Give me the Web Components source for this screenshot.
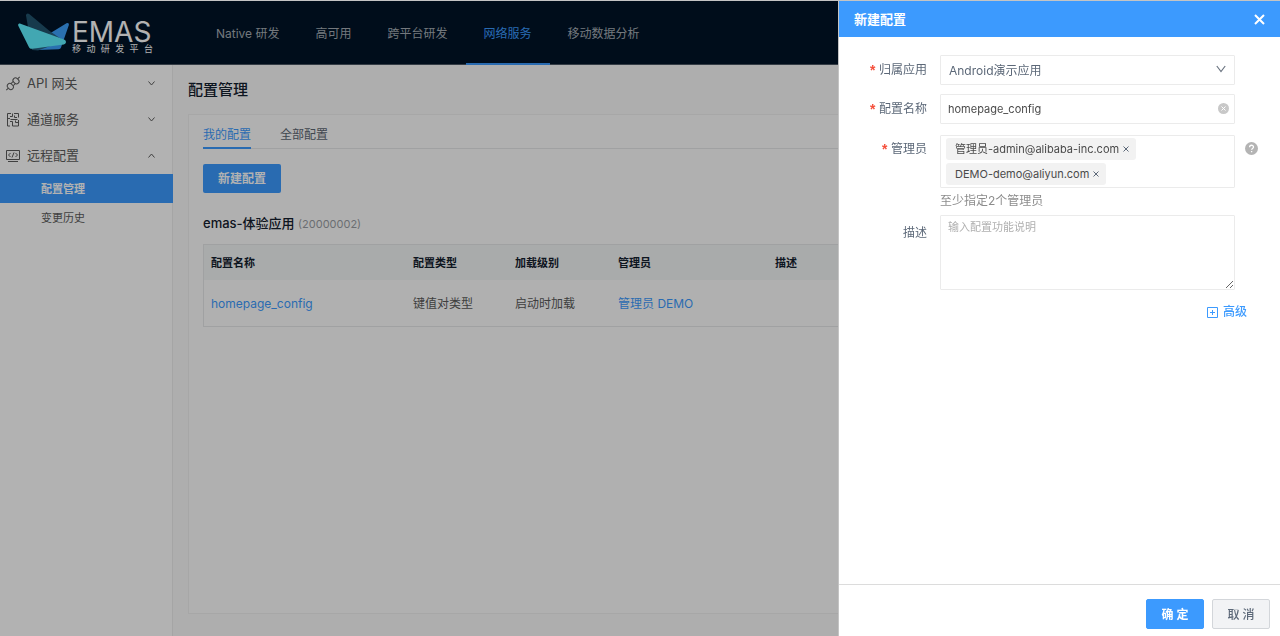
<!DOCTYPE html>
<html lang="zh-CN">
<head>
<meta charset="utf-8">
<title>EMAS 配置管理</title>
<style>
  body {
    margin: 0;
    font-family: Inter, "Noto Sans CJK SC", sans-serif;
    font-size: 12px;
    line-height: 18px;
    color: #5a5a5a;
    --brand: #3c9afe;
    --line: #e6e7e8;
    --ink: #14202e;
  }
</style>
</head>
<body>
<emas-app></emas-app>
<script>
const define = (name, html, setup) => customElements.define(name, class extends HTMLElement {
  constructor() {
    super();
    const t = document.createElement('template');
    t.innerHTML = html;
    this.attachShadow({ mode: 'open' }).append(t.content.cloneNode(true));
    if (setup) setup(this.shadowRoot, this);
  }
});

define('emas-logo', `
<style>
  :host { display: flex; align-items: flex-start; gap: 2px; color: #fff; }
  svg { display: block; margin-top: 12px; }
  .word { display: flex; flex-direction: column; width: 81px; padding-top: 19px; }
  .name { font-size: 28px; line-height: 24px; font-weight: 400; }
  .sub { font-size: 9px; line-height: 9px; text-align: justify; text-align-last: justify; }
</style>
<svg width="52" height="40" viewBox="0 0 52 40" aria-hidden="true">
  <path fill="#3da1fd" d="M48.500 10.200c1.700-.6 2.800.4 2.300 2L43 34.500c-.5 1.300-1.200 1.700-2.500 1.700L20 37 14 34 30.500 21.300z"/>
  <path fill="#255a75" d="M8 2.500C8 .6 9.800-.1 11.200 1L31 17.500 46 28 20 37.500 14 37z" opacity=".9"/>
  <path fill="#5ff0ff" d="M2.500 10.700 46 26.500c2.800 1 2.500 4.500-.2 5L14.500 35.800c-1.700.2-2.700-.2-3.500-1.600L.4 13c-.8-1.600.4-2.900 2.100-2.300z"/>
</svg>
<div class="word"><span class="name">EMAS</span><span class="sub">移动研发平台</span></div>
`);

define('app-header', `
<style>
  :host { display: flex; height: 63px; background: #001428; border-bottom: 1px solid #4b5764; padding-left: 18px; }
  emas-logo { width: 180px; flex: none; }
  nav { display: flex; }
  a { display: flex; align-items: center; padding: 3px 18px 0; color: #a6adb4; text-decoration: none; border-bottom: 2px solid transparent; margin-bottom: -1px; white-space: nowrap; }
  a[aria-current] { color: var(--brand); border-color: var(--brand); }
</style>
<emas-logo></emas-logo>
<nav>
  <a href="#native">Native 研发</a><a href="#ha">高可用</a><a href="#cross">跨平台研发</a><a href="#net" aria-current="page">网络服务</a><a href="#data">移动数据分析</a>
</nav>
`);

define('menu-group', `
<style>
  :host { display: block; }
  button { display: flex; align-items: center; width: 100%; height: 36px; margin: 0; padding: 0 16px 0 5px; border: 0; background: none; font: inherit; font-size: 13px; color: inherit; gap: 6px; text-align: left; }
  .label { flex: 1; }
  ::slotted(svg) { width: 16px; height: 16px; flex: none; }
  .arrow { width: 9px; height: 9px; }
  :host([open]) .arrow { transform: rotate(180deg); }
</style>
<button type="button"><slot name="icon"></slot><span class="label"></span>
<svg class="arrow" viewBox="0 0 9 9" fill="none" stroke="currentColor"><path d="M1.500 2.500l3 3.500 3-3.500"/></svg></button>
<slot></slot>
`, (root, host) => {
  root.querySelector('.label').textContent = host.getAttribute('label');
  root.querySelector('button').setAttribute('aria-expanded', host.hasAttribute('open'));
});

define('app-sidebar', `
<style>
  :host { display: block; background: #fff; border-right: 1px solid #ececec; box-sizing: border-box; color: #5c5c5c; }
  a { display: flex; align-items: center; height: 29px; padding-left: 41px; font-size: 11px; color: inherit; text-decoration: none; }
  a[aria-current] { background: var(--brand); color: #fff; font-weight: 700; margin: 1px -1px 0 0; }
  svg { fill: none; stroke: currentColor; }
</style>
<menu-group label="API 网关"><svg slot="icon" viewBox="0 0 16 16"><g transform="rotate(-45 8 8.500)"><rect x="1.500" y="5.500" width="5" height="6.500" rx="2.500"/><rect x="9.500" y="5.500" width="5" height="6.500" rx="2.500"/><path d="M-1.500 8.500h3M14.500 8.500h3M6.500 7.200h3M6.500 10.200h3"/></g></svg></menu-group>
<menu-group label="通道服务"><svg slot="icon" viewBox="0 0 16 16"><path d="M6 2.500H2.500V15H5M2.500 7.500H5M7.500 2.500v3H5M9 2.500h4.500v4M13.500 9v6H7.500v-2.500M5 10.500h2.500V15M13.500 11.500h-3v-2M5.500 8.500h7M9.500 4.500v2h2.500"/></svg></menu-group>
<menu-group label="远程配置" open><svg slot="icon" viewBox="0 0 16 16"><path d="M1.500 3.500h13v9h-13zM3 14.500h10M5.500 6L3.500 8l2 2M10.500 6l2 2-2 2M9 5.500l-2 5"/></svg>
  <a href="#config" aria-current="page">配置管理</a>
  <a href="#history">变更历史</a>
</menu-group>
`);

define('config-table', `
<style>
  :host { display: block; }
  table { width: 100%; table-layout: fixed; border-collapse: separate; border-spacing: 0; border: 1px solid var(--line); box-sizing: border-box; }
  th, td { padding: 0 7px; text-align: left; white-space: nowrap; }
  th { height: 35px; background: #f2f5f5; font-size: 11px; font-weight: 700; color: var(--ink); }
  td { height: 44px; padding-top: 2px; }
  a { color: var(--brand); text-decoration: none; }
  .c1 { width: 202px; } .c2 { width: 102px; } .c3 { width: 103px; } .c4 { width: 157px; }
</style>
<table>
  <colgroup><col class="c1"><col class="c2"><col class="c3"><col class="c4"><col></colgroup>
  <thead><tr><th>配置名称</th><th>配置类型</th><th>加载级别</th><th>管理员</th><th>描述</th></tr></thead>
  <tbody><tr><td><a href="#homepage_config">homepage_config</a></td><td>键值对类型</td><td>启动时加载</td><td><a href="#admins">管理员 DEMO</a></td><td></td></tr></tbody>
</table>
`);

define('config-page', `
<style>
  :host { display: flex; flex-direction: column; padding: 14px 15px 22px; background: #fafafa; box-sizing: border-box; }
  h1 { margin: 0 0 14px; font-size: 15px; line-height: 21px; font-weight: 500; color: var(--ink); }
  section { flex: 1; display: flex; flex-direction: column; align-items: stretch; background: #fdfdfd; border: 1px solid #f0f0f0; padding: 5px 14px 14px; }
  .tabs { display: flex; gap: 29px; border-bottom: 1px solid var(--line); margin-bottom: 15px; }
  .tabs button { padding: 2px 0 0; border: 0; background: none; font: inherit; color: #5c6672; height: 29px; border-bottom: 2px solid transparent; margin-bottom: -1px; }
  .tabs button[aria-selected=true] { color: var(--brand); border-color: var(--brand); }
  .create { align-self: flex-start; height: 29px; padding: 0 15px; border: 0; border-radius: 2px; background: var(--brand); color: #fff; font: inherit; font-weight: 700; }
  h2 { margin: 21px 0 11px; font-size: 13px; line-height: 18px; font-weight: 500; color: var(--ink); }
  h2 small { font-size: 11px; font-weight: 400; color: #9a9ea4; }
</style>
<h1>配置管理</h1>
<section>
  <div class="tabs" role="tablist"><button role="tab" aria-selected="true">我的配置</button><button role="tab" aria-selected="false">全部配置</button></div>
  <button class="create" type="button">新建配置</button>
  <h2>emas-体验应用 <small>(20000002)</small></h2>
  <config-table></config-table>
</section>
`);

define('form-row', `
<style>
  :host { display: grid; grid-template-columns: 88px minmax(0, 1fr) 45px; }
  .label { display: flex; justify-content: flex-end; align-items: flex-start; gap: 2px; padding: var(--label-top, 6px) 0 0; color: #5c6878; }
  .star { display: none; color: #f5503c; font: 700 14px/22px "Liberation Mono", monospace; }
  :host([required]) .star { display: block; }
  .control { min-width: 0; padding-left: 13px; }
  .extra { padding: 7px 0 0 10px; }
</style>
<div class="label"><span class="star">*</span><slot name="label"></slot></div>
<div class="control"><slot></slot></div>
<div class="extra"><slot name="extra"></slot></div>
`);

define('admin-tag', `
<style>
  :host { display: inline-flex; align-items: center; height: 22px; padding: 0 6px 0 9px; gap: 3px; background: #f2f2f2; border-radius: 3px; font-size: 11px; color: #4a4a4a; white-space: nowrap; }
  button { display: flex; padding: 0; border: 0; background: none; color: #5c6878; }
  svg { width: 8px; height: 8px; }
</style>
<slot></slot><button type="button" aria-label="移除"><svg viewBox="0 0 8 8" stroke="currentColor"><path d="M1.500 1.500l5 5M6.500 1.500l-5 5"/></svg></button>
`);

define('config-drawer', `
<style>
  :host { display: flex; flex-direction: column; background: #fff; box-shadow: -1px 0 0 #c4c4c4; }
  header { display: flex; align-items: center; justify-content: space-between; height: 36px; padding: 0 15px; background: var(--brand); color: #fff; }
  h2 { margin: 0; font-size: 13px; line-height: 18px; font-weight: 700; }
  button { font: inherit; }
  header button { display: flex; padding: 0; border: 0; background: none; color: #fff; }
  form { flex: 1; display: flex; flex-direction: column; gap: 9px; padding: 18px 0 0; }
  label { line-height: 18px; }
  .box { display: block; position: relative; }
  select, input.name, textarea, .tags { display: block; box-sizing: border-box; width: 100%; border: 1px solid #ebebeb; border-radius: 1px; background: #fff; outline: 0; margin: 0; font: inherit; }
  select, input.name { height: 30px; }
  select { appearance: none; padding: 1px 30px 0 8px; color: #5c6878; }
  input.name { padding: 0 26px 0 7px; font-size: 11px; color: #4a4a4a; }
  .box svg { position: absolute; right: 9px; top: 50%; margin-top: -6px; pointer-events: none; }
  .box .clear { position: absolute; right: 6px; top: 50%; margin-top: -6px; padding: 0; border: 0; background: none; display: flex; }
  .box .clear svg { position: static; margin: 0; }
  .tags { display: flex; flex-wrap: wrap; gap: 3px; padding: 2px 5px; }
  .tags input { flex: 1; min-width: 40px; width: 40px; border: 0; outline: 0; padding: 0; font: inherit; background: none; }
  .hint { color: #8c8c8c; margin: 4px 0 0; line-height: 18px; }
  textarea { height: 75px; padding: 2px 7px; font-size: 11px; line-height: 18px; resize: vertical; }
  textarea::placeholder { color: #b0b0b0; opacity: 1; }
  .admins { margin-top: 2px; --label-top: 5px; }
  .desc { margin-top: -4px; --label-top: 9px; }
  .more { align-self: flex-end; display: flex; align-items: center; gap: 5px; margin: 4px 33px 0 0; color: var(--brand); text-decoration: none; font-weight: 500; }
  footer { display: flex; justify-content: flex-end; gap: 8px; padding: 14px 10px 7px; border-top: 1px solid #dcdcdc; }
  footer button { min-width: 58px; height: 30px; padding: 1px 14px 0; border: 1px solid #d3d6da; border-radius: 2px; background: #f2f3f5; color: #5c6878; font-weight: 500; }
  footer .ok { background: var(--brand); border-color: var(--brand); color: #fff; font-weight: 700; }
</style>
<header><h2>新建配置</h2><button type="button" aria-label="关闭"><svg width="11" height="11" viewBox="0 0 11 11" stroke="currentColor" stroke-width="2"><path d="M1 1l9 9M10 1l-9 9"/></svg></button></header>
<form>
  <form-row required>
    <label slot="label" for="app">归属应用</label>
    <span class="box"><select id="app"><option>Android演示应用</option></select>
    <svg width="10" height="10" viewBox="0 0 10 10" fill="none" stroke="#6b7480" stroke-width="1.200"><path d="M.8 2l4.200 5.500L9.200 2"/></svg></span>
  </form-row>
  <form-row required>
    <label slot="label" for="name">配置名称</label>
    <span class="box"><input class="name" id="name" value="homepage_config">
    <button class="clear" type="button" aria-label="清空"><svg width="11" height="11" viewBox="0 0 11 11"><circle cx="5.500" cy="5.500" r="5.500" fill="#c8c8c8"/><path d="M3.500 3.500l4 4M7.500 3.500l-4 4" stroke="#fff"/></svg></button></span>
  </form-row>
  <form-row required class="admins">
    <label slot="label" for="admins">管理员</label>
    <div class="tags"><admin-tag>管理员-admin@alibaba-inc.com</admin-tag><admin-tag>DEMO-demo@aliyun.com</admin-tag><input id="admins"></div>
    <p class="hint">至少指定2个管理员</p>
    <svg slot="extra" width="13" height="13" viewBox="0 0 13 13"><circle cx="6.500" cy="6.500" r="6.500" fill="#b4b4b4"/><path d="M4.600 5.200c0-2.600 3.900-2.500 3.900-.2 0 1.400-1.900 1.400-1.900 2.800M6.600 9v1.300" fill="none" stroke="#fff" stroke-width="1.300"/></svg>
  </form-row>
  <form-row class="desc">
    <label slot="label" for="desc">描述</label>
    <textarea id="desc" placeholder="输入配置功能说明"></textarea>
  </form-row>
  <a class="more" href="#advanced"><svg width="11" height="11" viewBox="0 0 11 11" fill="none" stroke="currentColor"><path d="M.5.5h10v10H.5zM5.500 3v5M3 5.500h5"/></svg>高级</a>
</form>
<footer><button class="ok" type="button">确 定</button><button type="button">取 消</button></footer>
`);

define('emas-app', `
<style>
  :host { display: grid; grid-template: auto 1fr / 173px minmax(0, 1fr); min-height: 100vh; box-sizing: border-box; border-top: 1px solid #c4c4c4; }
  app-header { grid-column: 1 / -1; }
  .mask { position: fixed; inset: 1px 0 0; background: rgba(0, 0, 0, .3); }
  config-drawer { position: fixed; top: 1px; right: 0; bottom: 0; width: 441px; }
</style>
<app-header></app-header>
<app-sidebar></app-sidebar>
<config-page></config-page>
<div class="mask"></div>
<config-drawer role="dialog" aria-label="新建配置"></config-drawer>
`);

</script>
</body>
</html>
